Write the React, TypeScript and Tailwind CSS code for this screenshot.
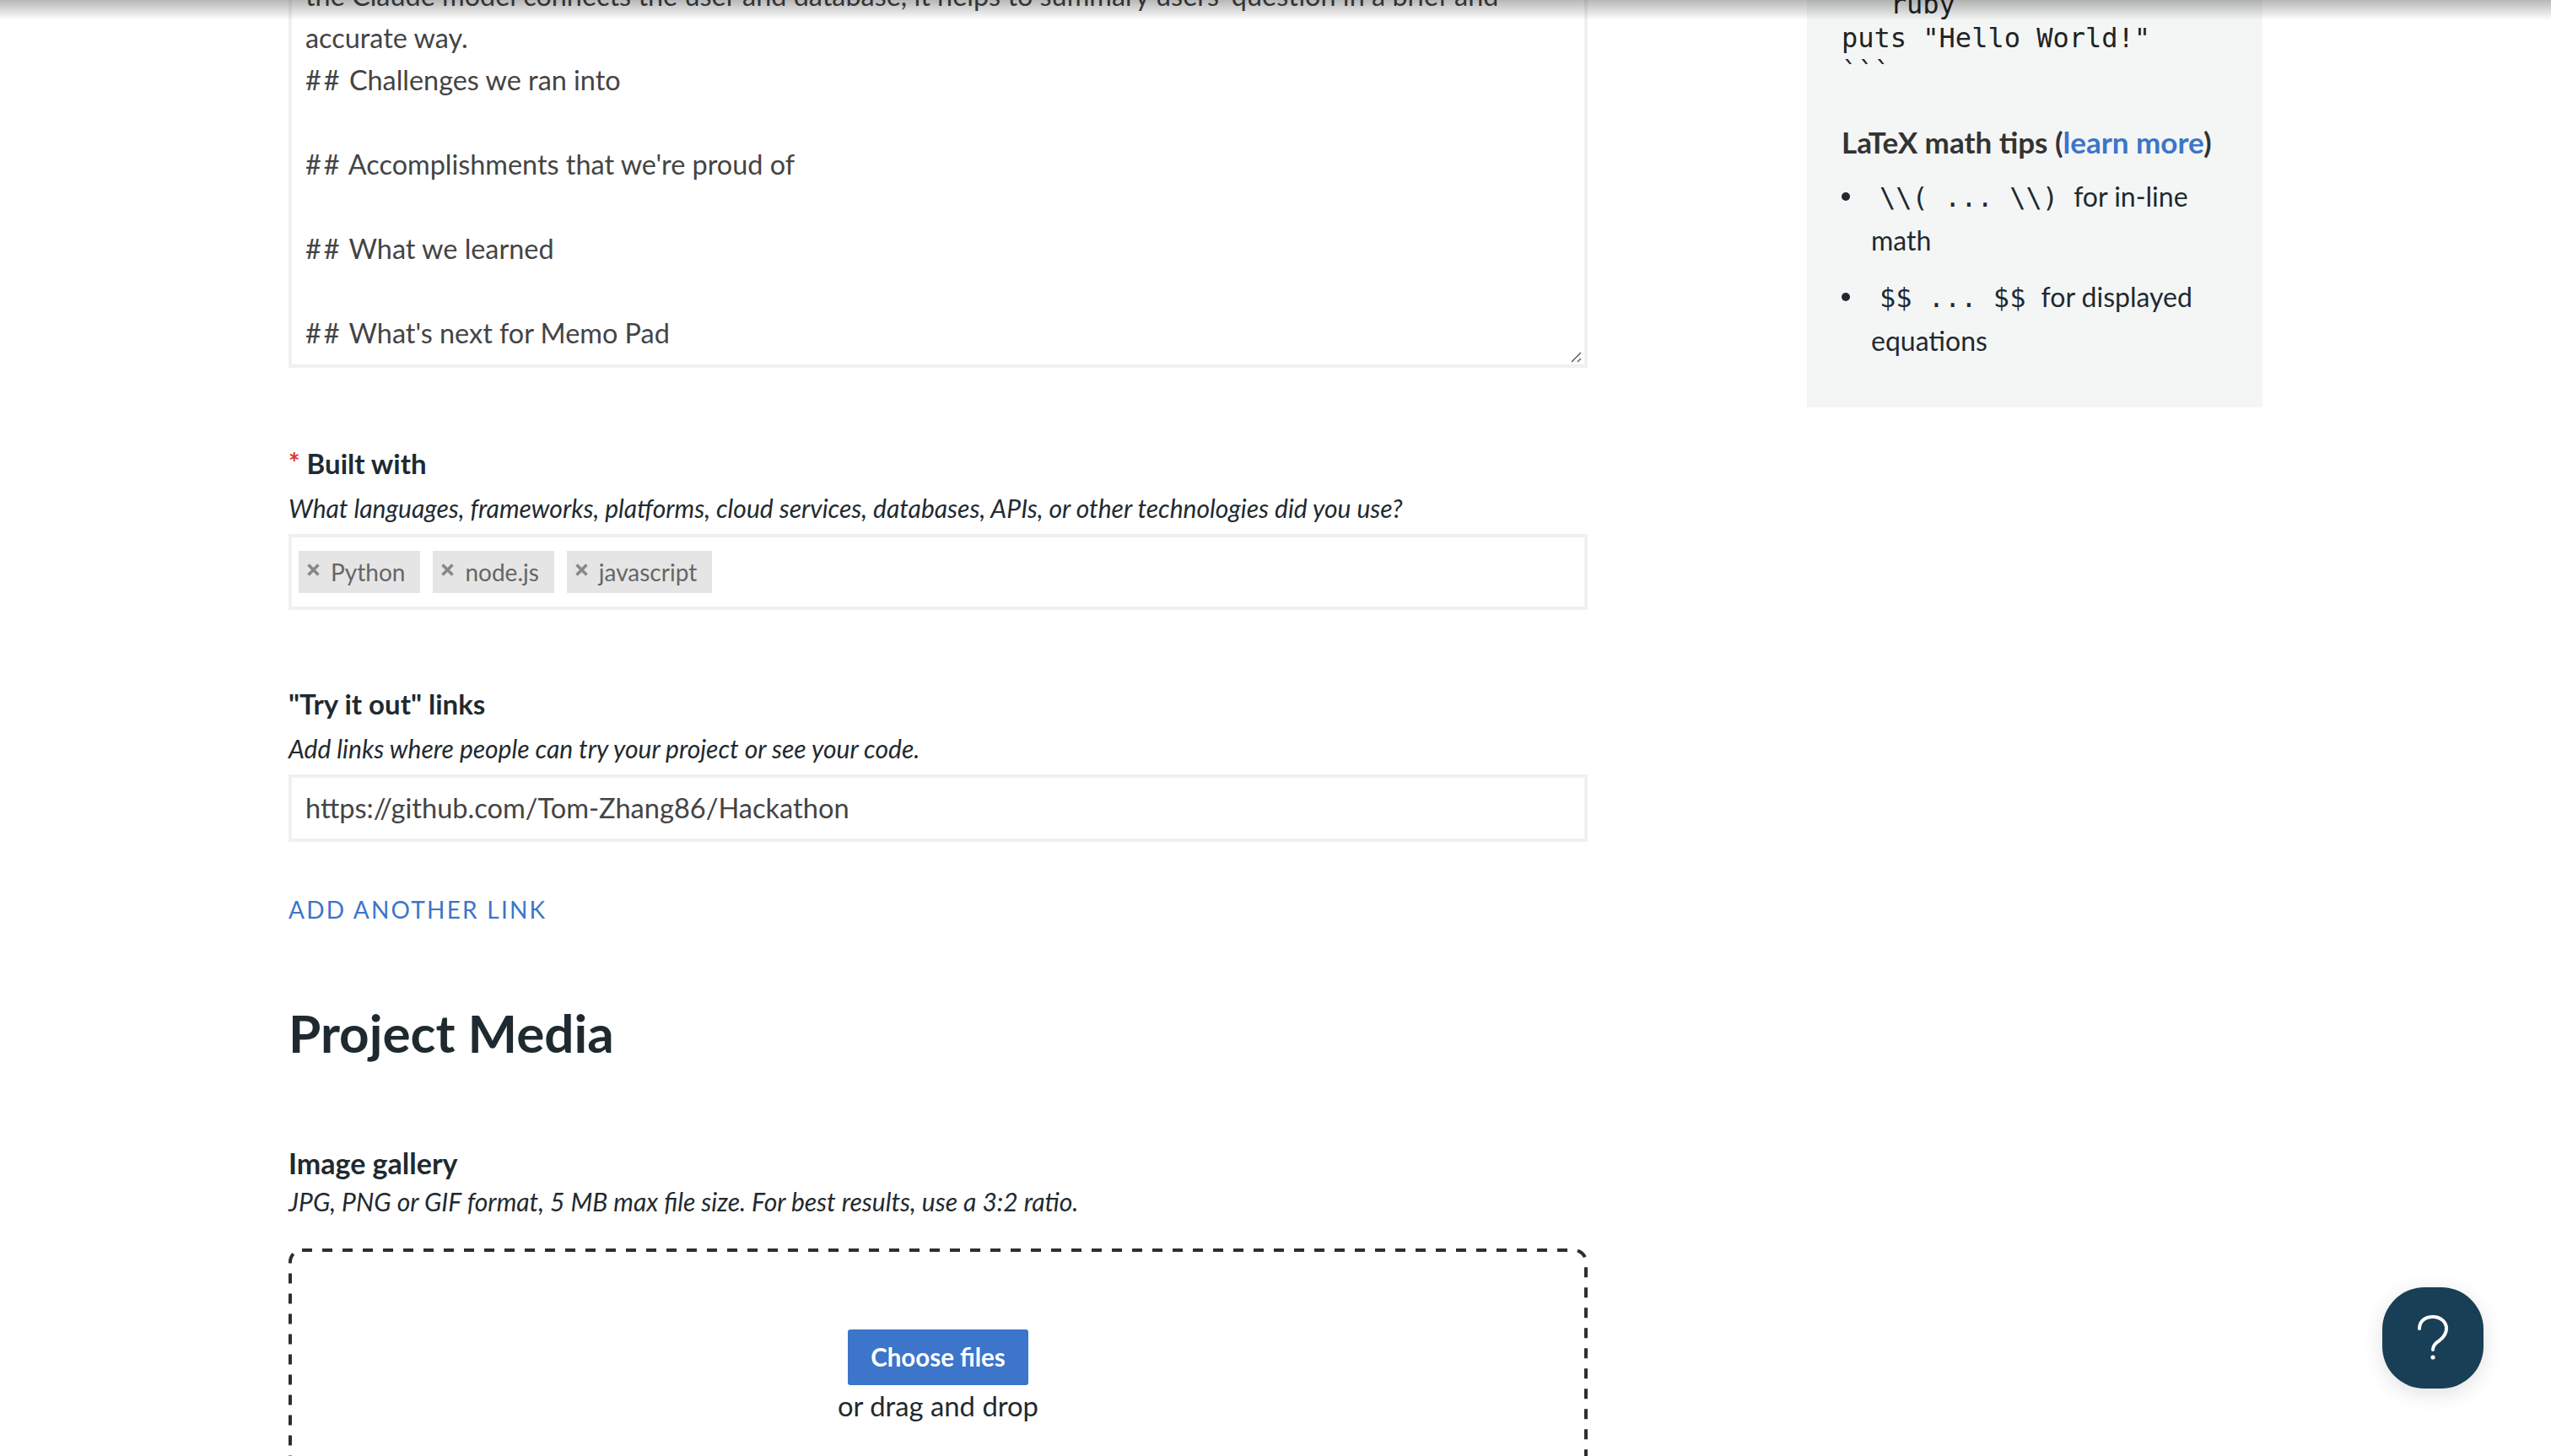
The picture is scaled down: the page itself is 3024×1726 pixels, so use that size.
const TAGS = ["Python", "node.js", "javascript"];

const TEXT_LINES = [
  "the Claude model connects the user and database, it helps to summary users' question in a brief and",
  "accurate way.",
  "## Challenges we ran into",
  "",
  "## Accomplishments that we're proud of",
  "",
  "## What we learned",
  "",
  "## What's next for Memo Pad",
];

function Tag({ label }: { label: string }) {
  return (
    <span className="flex h-[50px] items-center bg-[#e5e5e5] pl-[10px] pr-[18px] text-[28px] text-[#666]">
      <svg className="mr-[13px] -translate-y-[3px]" width="15" height="15" viewBox="0 0 15 15" fill="none">
        <path d="M1.5 1.5l12 12M13.5 1.5l-12 12" stroke="#888" strokeWidth="3.6" />
      </svg>
      {label}
    </span>
  );
}

function ResizeGrip() {
  return (
    <svg className="absolute right-[2px] bottom-[2px] h-[14px] w-[14px]" viewBox="0 0 14 14" fill="none">
      <path d="M1 13 12 2M8 13l4-4" stroke="#666" strokeWidth="1.6" />
    </svg>
  );
}

function Bullet() {
  return <span className="absolute top-[21px] -left-[35px] h-[10px] w-[10px] rounded-full bg-[#1f2a30]" />;
}

// markdown heading marks run a little wider than the body text
function TextLine({ line }: { line: string }) {
  if (!line.startsWith("## ")) return <div className="h-[50px] whitespace-nowrap">{line}</div>;
  return (
    <div className="h-[50px] whitespace-nowrap">
      <span className="tracking-[3px]">##</span> {line.slice(3)}
    </div>
  );
}

export default function App() {
  return (
    <div className="relative h-[1726px] overflow-hidden bg-white font-['Lato',sans-serif] text-[#1f2a30]">
      {/* shadow of the sticky header that sits just above the viewport */}
      <div className="pointer-events-none absolute inset-x-0 top-0 z-10 h-[24px] bg-gradient-to-b from-[#00000048] to-transparent" />

      <div className="flex items-start pl-[342px]">
        {/* form column */}
        <div className="-mt-[60px] w-[1540px] shrink-0">
          <div className="relative border-4 border-[#eef1f2] pt-[26px] pr-4 pb-[12px] pl-4 text-[32.4px] leading-[50px] text-[#444]">
            {TEXT_LINES.map((line, i) => (
              <TextLine key={i} line={line} />
            ))}
            <ResizeGrip />
          </div>

          <div className="mt-[88px] flex items-center text-[33px] leading-[50px] font-bold">
            <span className="mr-[8px] text-[32px] text-[#d9372c]">*</span>
            Built with
          </div>
          <p className="mt-[3px] text-[30px] leading-[50px] italic">
            What languages, frameworks, platforms, cloud services, databases, APIs, or other technologies did you use?
          </p>
          <div className="mt-[6px] flex h-[90px] items-center gap-[15px] border-4 border-[#eef1f2] pl-[8px]">
            {TAGS.map((tag) => (
              <Tag key={tag} label={tag} />
            ))}
          </div>

          <div className="mt-[86px] text-[33px] leading-[50px] font-bold">"Try it out" links</div>
          <p className="mt-[3px] text-[30px] leading-[50px] italic">
            Add links where people can try your project or see your code.
          </p>
          <div className="mt-[6px] flex h-[80px] items-center border-4 border-[#eef1f2] pl-4 text-[32.6px] text-[#444]">
            https://github.com/Tom-Zhang86/Hackathon
          </div>

          <div className="mt-[60px] text-[28px] leading-[40px] tracking-[0.08em] text-[#3c75c9]">ADD ANOTHER LINK</div>

          <h2 className="mt-[86px] text-[62px] leading-[80px] font-bold">Project Media</h2>

          <div className="mt-[90px] text-[34px] leading-[50px] font-bold">Image gallery</div>
          <p className="-mt-[5px] text-[30px] leading-[50px] italic">
            JPG, PNG or GIF format, 5 MB max file size. For best results, use a 3:2 ratio.
          </p>
          <div className="relative mt-[31px] flex h-[400px] flex-col items-center pt-[96px]">
            <svg className="absolute inset-0" width="1540" height="400" fill="none">
              <rect x="2" y="2" width="1536" height="396" rx="14" stroke="#2b2f33" strokeWidth="4" strokeDasharray="12 12" />
            </svg>
            <button className="h-[66px] w-[214px] rounded-[3px] bg-[#3c75c9] text-[29.5px] font-bold text-white">
              Choose files
            </button>
            <span className="text-[32.8px] leading-[50px]">or drag and drop</span>
          </div>
        </div>

        {/* sidebar */}
        <aside className="-mt-[60px] ml-[260px] h-[543px] w-[540px] shrink-0 bg-[#f4f6f6] pt-[5px] pl-[41px]">
          <pre className="font-['DejaVu_Sans_Mono',monospace] text-[32px] leading-[40px] text-[#222]">
            {"```\n   ruby\nputs \"Hello World!\"\n```"}
          </pre>
          <div className="mt-[38px] text-[35px] leading-[50px] font-bold text-[#333]">
            LaTeX math tips (<span className="text-[#3c75c9]">learn more</span>)
          </div>
          <ul className="mt-[14px] pl-[35px] text-[32px] leading-[52px]">
            <li className="relative pr-[30px]">
              <Bullet />
              <code className="px-[10px] font-['DejaVu_Sans_Mono',monospace] text-[32px] leading-none">\\( ... \\)</code>{" "}
              for in-line math
            </li>
            <li className="relative mt-[15px] pr-[30px]">
              <Bullet />
              <code className="px-[10px] font-['DejaVu_Sans_Mono',monospace] text-[32px] leading-none">$$ ... $$</code>{" "}
              for displayed equations
            </li>
          </ul>
        </aside>
      </div>

      {/* help button */}
      <button className="absolute top-[1526px] left-[2824px] flex h-[120px] w-[120px] items-center justify-center rounded-[50px] bg-[#183f55] shadow-[0_6px_24px_rgba(0,0,0,0.12)]">
        <svg width="36" height="54" viewBox="0 0 36 54" fill="none" stroke="white" strokeWidth="4" strokeLinecap="round">
          <path d="M2 16C2 7 9 2 18 2s16 6 16 14c0 6-3 10-8 14-5 3-8 6-8 11" />
          <circle cx="18" cy="50" r="2.6" fill="white" stroke="none" />
        </svg>
      </button>
    </div>
  );
}
